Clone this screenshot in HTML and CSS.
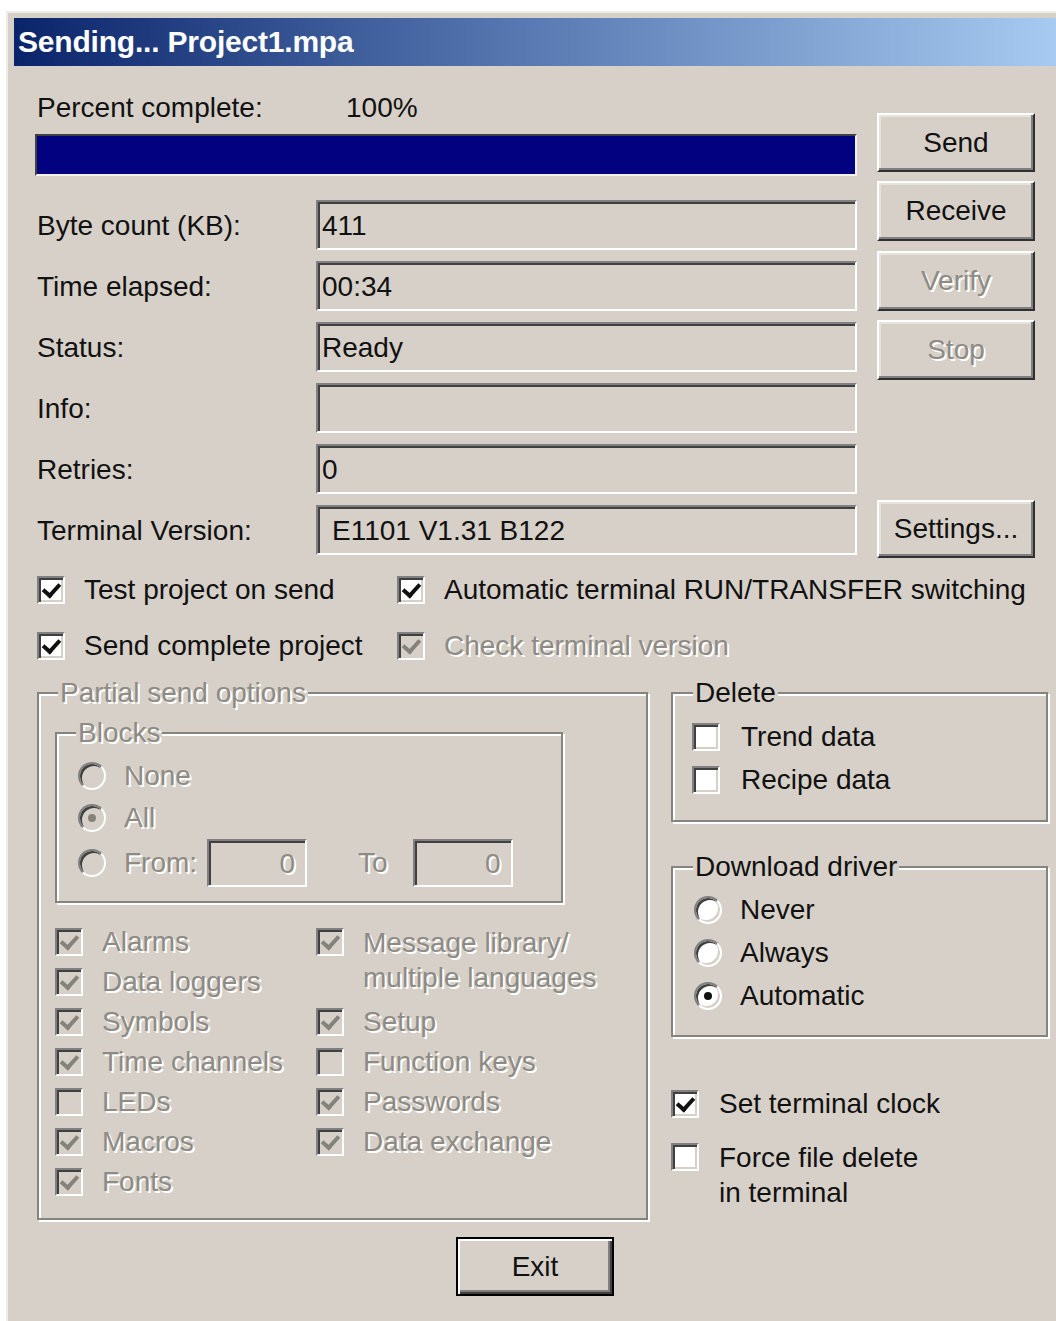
FILE: index.html
```html
<!DOCTYPE html>
<html lang="en">
<head>
<meta charset="utf-8">
<title>Sending... Project1.mpa</title>
<link rel="stylesheet" href="styles.css">
</head>
<body>
<div class="window">
  <div class="titlebar">Sending... Project1.mpa</div>
  <div class="dialog">

    <div class="top">
      <div class="progress-area">
        <div class="percent-row"><span class="percent-label">Percent complete:</span><span>100%</span></div>
        <div class="progress"><div class="progress-fill" style="width:100%"></div></div>
        <div class="fields">
          <span class="label">Byte count (KB):</span><div class="field">411</div>
          <span class="label">Time elapsed:</span><div class="field">00:34</div>
          <span class="label">Status:</span><div class="field">Ready</div>
          <span class="label">Info:</span><div class="field"></div>
          <span class="label">Retries:</span><div class="field">0</div>
          <span class="label">Terminal Version:</span><div class="field field-indent">E1101 V1.31 B122</div>
        </div>
      </div>
      <div class="buttons">
        <button class="btn btn-send">Send</button>
        <button class="btn btn-receive">Receive</button>
        <button class="btn btn-verify" disabled><span class="dim">Verify</span></button>
        <button class="btn btn-stop" disabled><span class="dim">Stop</span></button>
        <button class="btn btn-settings">Settings...</button>
      </div>
    </div>

    <div class="options">
      <label class="check"><span class="box checked"></span><span>Test project on send</span></label>
      <label class="check"><span class="box checked"></span><span>Automatic terminal RUN/TRANSFER switching</span></label>
      <label class="check"><span class="box checked"></span><span>Send complete project</span></label>
      <label class="check"><span class="box checked disabled"></span><span class="dim">Check terminal version</span></label>
    </div>

    <div class="bottom">
      <fieldset class="group group-partial">
        <legend class="dim">Partial send options</legend>
        <fieldset class="group group-blocks">
          <legend class="dim">Blocks</legend>
          <div class="radio-list">
            <div class="opt opt-radio"><span class="radio disabled"></span><span class="dim">None</span></div>
            <div class="opt opt-radio"><span class="radio selected disabled"></span><span class="dim">All</span></div>
            <div class="opt opt-radio opt-range">
              <span class="radio disabled"></span><span class="dim range-from">From:</span>
              <div class="mini-field"><span class="dim">0</span></div>
              <span class="dim range-to">To</span>
              <div class="mini-field"><span class="dim">0</span></div>
            </div>
          </div>
        </fieldset>
        <div class="parts">
          <div class="check"><span class="box checked disabled"></span><span class="dim">Alarms</span></div>
          <div class="check check-multi span-2"><span class="box checked disabled"></span><span class="dim">Message library/<br>multiple languages</span></div>
          <div class="check"><span class="box checked disabled"></span><span class="dim">Data loggers</span></div>
          <div class="check"><span class="box checked disabled"></span><span class="dim">Symbols</span></div>
          <div class="check"><span class="box checked disabled"></span><span class="dim">Setup</span></div>
          <div class="check"><span class="box checked disabled"></span><span class="dim">Time channels</span></div>
          <div class="check"><span class="box disabled"></span><span class="dim">Function keys</span></div>
          <div class="check"><span class="box disabled"></span><span class="dim">LEDs</span></div>
          <div class="check"><span class="box checked disabled"></span><span class="dim">Passwords</span></div>
          <div class="check"><span class="box checked disabled"></span><span class="dim">Macros</span></div>
          <div class="check"><span class="box checked disabled"></span><span class="dim">Data exchange</span></div>
          <div class="check"><span class="box checked disabled"></span><span class="dim">Fonts</span></div>
        </div>
      </fieldset>

      <div class="side">
        <fieldset class="group group-delete">
          <legend>Delete</legend>
          <div class="side-list">
            <label class="opt"><span class="box"></span><span>Trend data</span></label>
            <label class="opt"><span class="box"></span><span>Recipe data</span></label>
          </div>
        </fieldset>
        <fieldset class="group group-driver">
          <legend>Download driver</legend>
          <div class="side-list">
            <label class="opt opt-radio"><span class="radio"></span><span>Never</span></label>
            <label class="opt opt-radio"><span class="radio"></span><span>Always</span></label>
            <label class="opt opt-radio"><span class="radio selected"></span><span>Automatic</span></label>
          </div>
        </fieldset>
        <label class="check side-check"><span class="box checked"></span><span>Set terminal clock</span></label>
        <label class="check check-multi side-check side-force"><span class="box"></span><span>Force file delete<br>in terminal</span></label>
      </div>
    </div>

    <div class="footer">
      <button class="btn btn-default">Exit</button>
    </div>

  </div>
</div>
</body>
</html>
```

FILE: styles.css
```css
* {
  box-sizing: border-box;
}

html,
body {
  margin: 0;
  padding: 0;
  background: #fff;
}

body {
  font-family: "Liberation Sans", Arial, sans-serif;
  font-size: 28px;
  color: #111;
}

/* ---------- window frame ---------- */
.window {
  margin: 11px 0 0 6px;
  width: 1050px;
  height: 1310px;
  background: #d6d0c8;
  border-top: 2px solid #eeece6;
  border-left: 2px solid #eeece6;
  padding: 5px 0 0 6px;
  overflow: hidden;
}

.titlebar {
  height: 48px;
  line-height: 48px;
  padding-left: 4px;
  background: linear-gradient(to right, #0a246a 0%, #4a6aa6 40%, #a6caf0 100%);
  color: #fff;
  font-weight: bold;
  font-size: 30px;
  letter-spacing: -0.2px;
  white-space: nowrap;
}

/* ---------- shared text ---------- */
.dim {
  color: #8e8b85;
  text-shadow: 2px 2px 0 #fff;
}

/* ---------- top section ---------- */
.top {
  display: flex;
  gap: 20px;
  padding-left: 21px;
}

.progress-area {
  width: 822px;
  padding-top: 26px;
}

.percent-row {
  display: flex;
  height: 32px;
  line-height: 32px;
  padding-left: 2px;
}

.percent-label {
  width: 309px;
}

.progress {
  margin-top: 10px;
  height: 42px;
  border: 2px solid;
  border-color: #404040 #f4f2ee #f4f2ee #404040;
  background: #d6d0c8;
}

.progress-fill {
  height: 100%;
  background: #020280;
}

.fields {
  display: grid;
  grid-template-columns: 281px 541px;
  grid-auto-rows: 50px;
  row-gap: 11px;
  margin-top: 24px;
}

.label {
  line-height: 52px;
  height: 50px;
  padding-left: 2px;
  white-space: nowrap;
}

.field {
  height: 50px;
  line-height: 48px;
  padding-left: 4px;
  border: 2px solid;
  border-color: #808080 #fff #fff #808080;
  box-shadow: inset 2px 2px 0 #404040, inset -2px -2px 0 #d6d0c8;
  background: #d6d0c8;
  white-space: nowrap;
  overflow: hidden;
}

.field-indent {
  padding-left: 14px;
}

/* ---------- push buttons ---------- */
.btn {
  font: inherit;
  color: #111;
  background: #d6d0c8;
  border: 2px solid;
  border-color: #fff #303030 #303030 #fff;
  box-shadow: inset -2px -2px 0 #808080, inset 2px 2px 0 #e6e3dd;
  padding: 0;
  width: 158px;
  flex: none;
  cursor: default;
}

.buttons {
  width: 158px;
  display: flex;
  flex-direction: column;
  padding-top: 47px;
}

.btn-send {
  height: 59px;
}

.btn-receive {
  height: 60px;
  margin-top: 9px;
}

.btn-verify {
  height: 60px;
  margin-top: 10px;
}

.btn-stop {
  height: 60px;
  margin-top: 9px;
}

.btn-settings {
  height: 58px;
  margin-top: 120px;
}

.btn-default {
  height: 59px;
  border-color: #000;
  box-shadow: inset 2px 2px 0 #fff, inset -2px -2px 0 #404040, inset -4px -4px 0 #808080;
}

/* ---------- checkboxes and radios ---------- */
.check,
.opt {
  display: flex;
  align-items: center;
  gap: 19px;
  height: 40px;
  white-space: nowrap;
}

.box {
  width: 28px;
  height: 28px;
  flex: none;
  display: flex;
  align-items: center;
  justify-content: center;
  background: #fff;
  border: 2px solid;
  border-color: #808080 #fff #fff #808080;
  box-shadow: inset 2px 2px 0 #404040, inset -2px -2px 0 #d6d0c8;
}

.box.checked::after {
  content: "";
  width: 7px;
  height: 13px;
  margin-top: -4px;
  border: solid #111;
  border-width: 0 4px 4px 0;
  transform: rotate(42deg);
}

.box.disabled {
  background: #d6d0c8;
}

.box.disabled.checked::after {
  border-color: #858279;
}

.radio {
  width: 28px;
  height: 28px;
  flex: none;
  display: flex;
  align-items: center;
  justify-content: center;
  border-radius: 50%;
  background: #fff;
  border: 2px solid;
  border-color: #808080 #fff #fff #808080;
  box-shadow: inset 2px 2px 0 #404040, inset -2px -2px 0 #d6d0c8;
}

.radio.selected::after {
  content: "";
  width: 8px;
  height: 8px;
  border-radius: 50%;
  background: #111;
}

.radio.disabled {
  background: #d6d0c8;
}

.radio.disabled.selected::after {
  background: #858279;
}

.opt-radio {
  gap: 18px;
}

.check-multi {
  align-items: flex-start;
  height: auto;
  line-height: 35px;
}

.check-multi .box {
  margin-top: 6px;
}

.check-multi > span:last-child {
  padding-top: 3px;
}

/* ---------- option rows ---------- */
.options {
  display: grid;
  grid-template-columns: 360px auto;
  row-gap: 16px;
  padding-left: 23px;
  margin-top: 12px;
}

/* ---------- group boxes ---------- */
.bottom {
  display: flex;
  align-items: flex-start;
  gap: 23px;
  padding-left: 23px;
  margin-top: 11px;
}

.group {
  margin: 0;
  min-width: 0;
  border: 2px solid #86847f;
  box-shadow: inset 2px 2px 0 #fff, 2px 2px 0 #fff;
}

.group legend {
  height: 32px;
  line-height: 32px;
  padding: 0 2px;
  background: #d6d0c8;
  white-space: nowrap;
}

.group-partial {
  width: 611px;
  padding: 0 16px 16px;
}

.group-partial > legend {
  margin-left: 3px;
}

.group-blocks {
  margin-top: 8px;
  width: 508px;
  padding: 0 21px 14px;
}

.group-blocks > legend {
  margin-left: -2px;
}

.radio-list {
  padding-top: 6px;
}

.radio-list .opt {
  height: 42px;
}

.radio-list .opt-range {
  height: 48px;
}

.range-from {
  margin-right: -8px;
}

.mini-field {
  width: 100px;
  height: 48px;
  flex: none;
  line-height: 46px;
  text-align: right;
  padding-right: 10px;
  border: 2px solid;
  border-color: #808080 #fff #fff #808080;
  box-shadow: inset 2px 2px 0 #404040, inset -2px -2px 0 #d6d0c8;
  background: #d6d0c8;
}

.range-to {
  margin-left: 33px;
  margin-right: 7px;
}

.parts {
  display: grid;
  grid-template-columns: 261px auto;
  grid-auto-rows: 40px;
  grid-auto-flow: row dense;
  margin-top: 19px;
}

.parts .span-2 {
  grid-row: span 2;
}

/* ---------- right column ---------- */
.side {
  width: 377px;
  display: flex;
  flex-direction: column;
}

.group-delete {
  padding: 0 19px 19px;
}

.group-delete > legend {
  margin-left: 1px;
}

.group-delete .opt {
  gap: 21px;
  height: 43px;
}

.group-driver {
  margin-top: 29px;
  padding: 0 21px 18px;
}

.group-driver > legend {
  margin-left: -1px;
}

.side-list {
  padding-top: 6px;
}

.group-driver .side-list {
  padding-top: 5px;
}

.group-driver .opt {
  height: 43px;
}

.side-check {
  gap: 20px;
  margin-top: 47px;
}

.side-force {
  margin-top: 16px;
}

.side-force .box {
  margin-top: 3px;
}

.side-force > span:last-child {
  padding-top: 0;
}

/* ---------- footer ---------- */
.footer {
  display: flex;
  justify-content: center;
  margin-top: 17px;
}
```
